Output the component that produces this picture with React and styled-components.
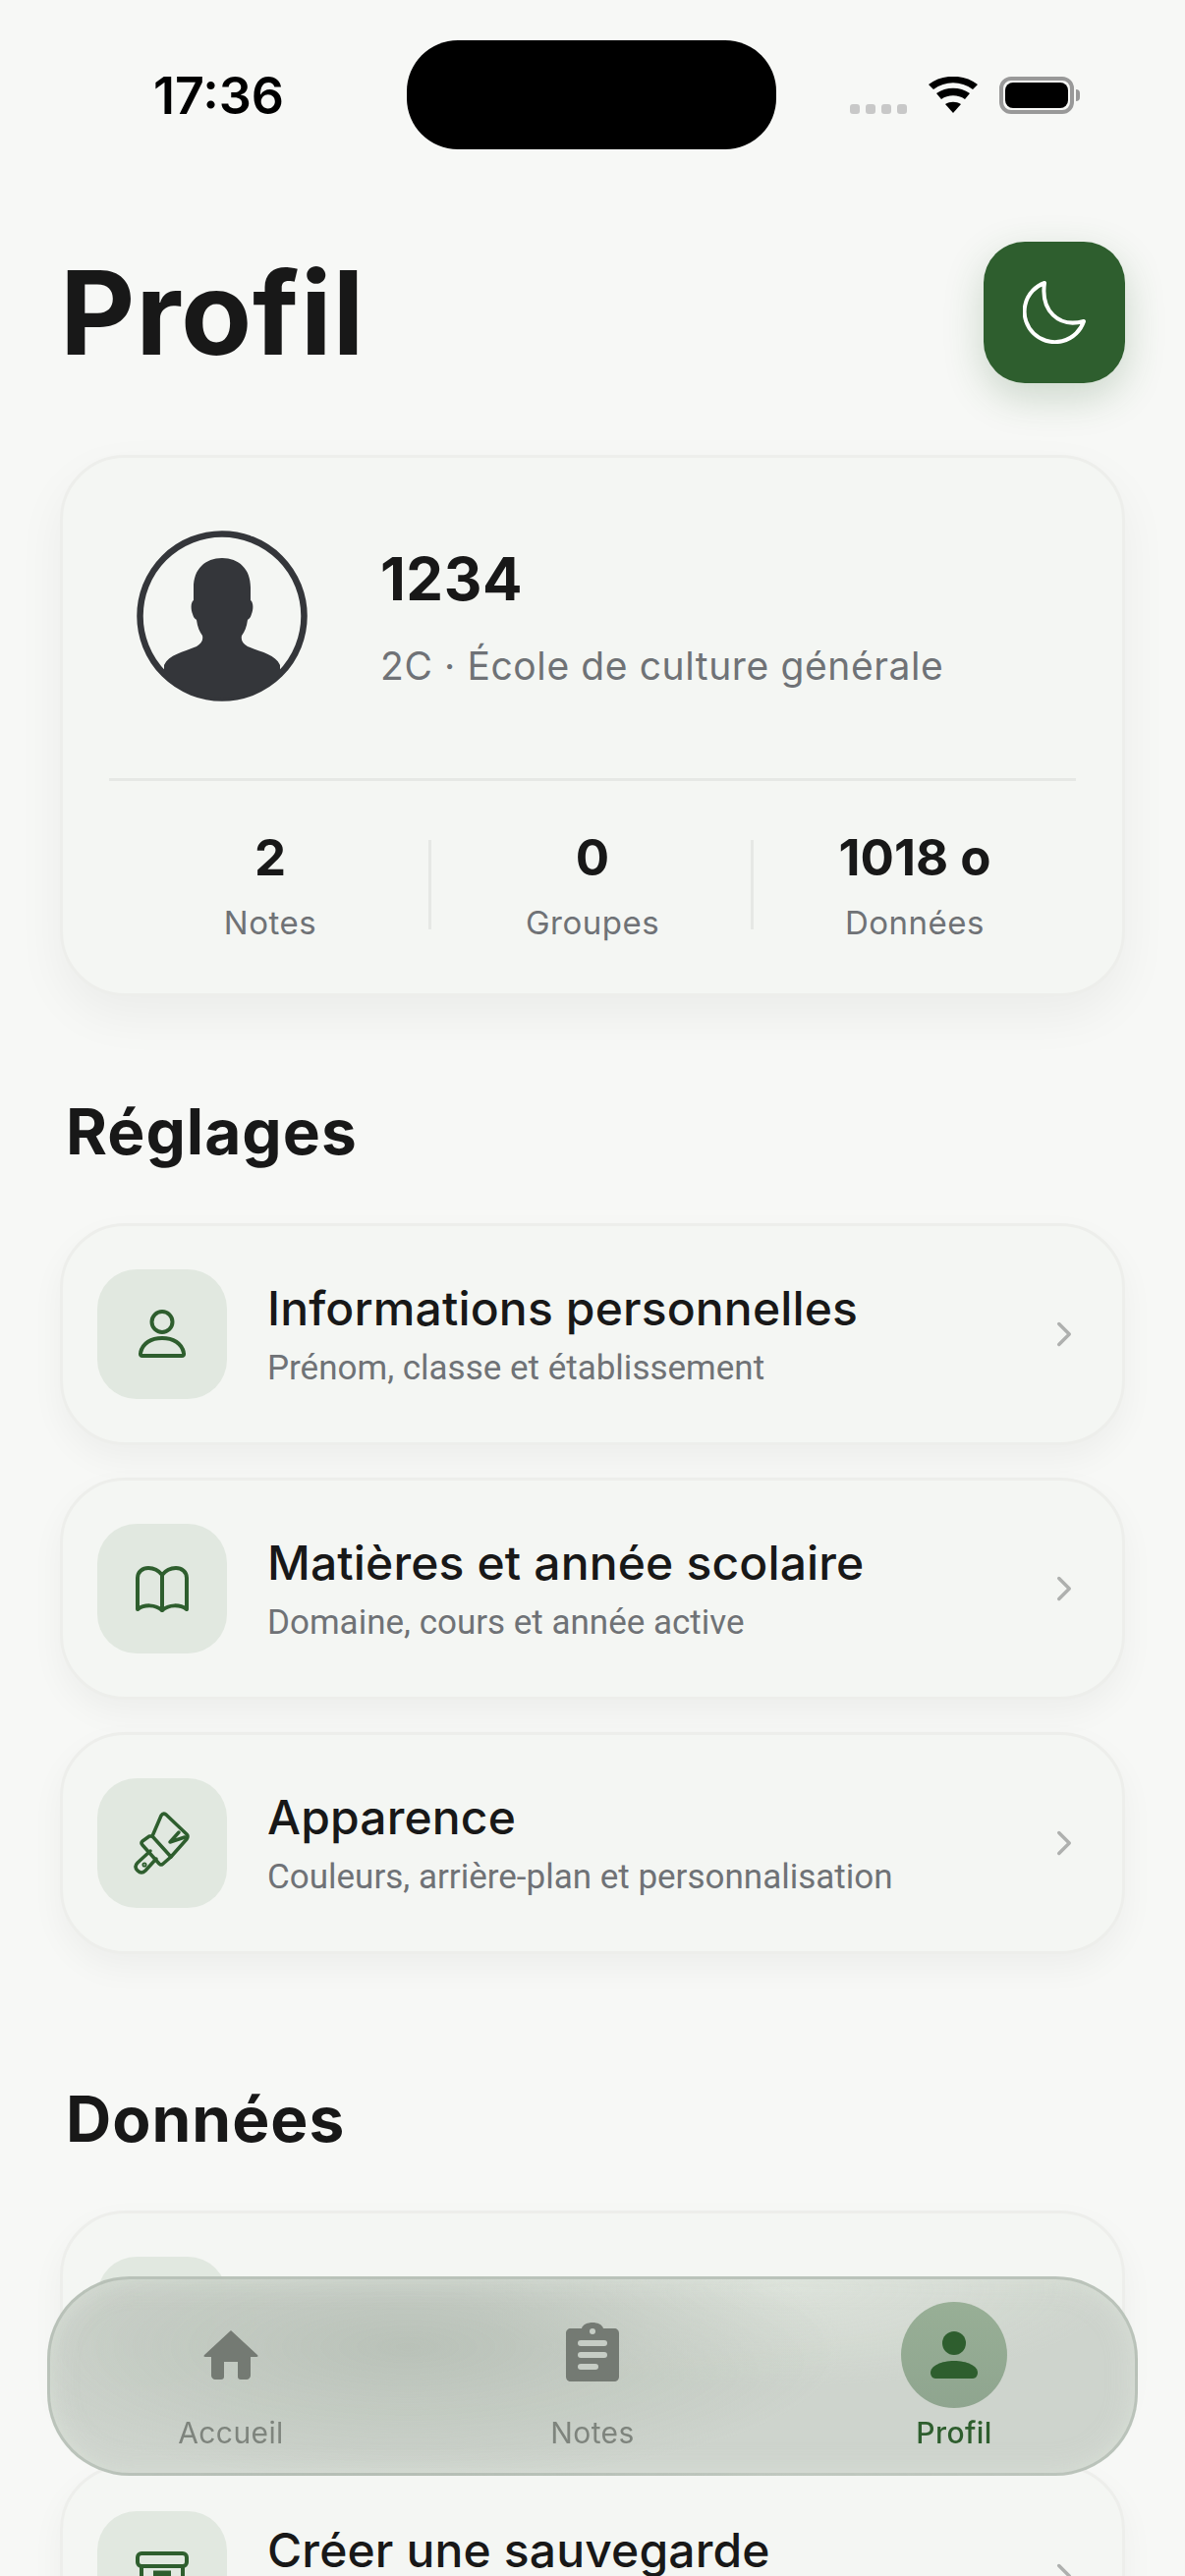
import styled, { createGlobalStyle } from "styled-components";
import { ChevronRight } from "lucide-react";

const GlobalStyle = createGlobalStyle`
    html, body {
        margin: 0;
        padding: 0;
        background: #F7F8F6;
    }
    * {
        box-sizing: border-box;
    }
`

const settings = [
    { title: "Informations personnelles", sub: "Prénom, classe et établissement", icon: <PersonIcon /> },
    { title: "Matières et année scolaire", sub: "Domaine, cours et année active", icon: <BookIcon /> },
    { title: "Apparence", sub: "Couleurs, arrière-plan et personnalisation", icon: <BrushIcon /> },
];

const stats = [
    { value: "2", label: "Notes" },
    { value: "0", label: "Groupes" },
    { value: "1018 o", label: "Données" },
];

function MoonIcon() {
    return (
        <svg width="64" height="64" viewBox="0 0 64 64" fill="none" stroke="#FFFFFF" strokeWidth="4" strokeLinejoin="round">
            <path d="M22 2C18 30 36 48 62 41A31 31 0 1 1 22 2z" />
        </svg>
    )
}

function PersonIcon() {
    return (
        <svg width="48" height="50" viewBox="0 0 48 50" fill="none" stroke="#2E5E2E" strokeWidth="4" strokeLinejoin="round">
            <circle cx="24" cy="12.500" r="10.500" />
            <path d="M4 47c-1.500 0-2.500-1-2-3C4 34 13 29 24 29s20 5 22 15c.5 2-.5 3-2 3z" />
        </svg>
    )
}

function BookIcon() {
    return (
        <svg width="54" height="47" viewBox="0 0 54 47" fill="none" stroke="#2E5E2E" strokeWidth="4" strokeLinejoin="round" strokeLinecap="round">
            <path d="M27 9C23 4 18 2 13 2 7 2 2 6 2 12v32c7-5 18-5 25 1 7-6 18-6 25-1V12c0-6-5-10-11-10-5 0-10 2-14 7z" />
            <path d="M27 9v36" />
        </svg>
    )
}

function BrushIcon() {
    return (
        <svg width="80" height="80" viewBox="0 4 80 80" fill="none" stroke="#2E5E2E" strokeWidth="3.500" strokeLinejoin="round" strokeLinecap="round">
            <path d="M30 37L39 16Q41 13 44 15L65 35Q67 37 65 40L49 58z" />
            <path d="M30 37H27L20 42Q18 44 20 46L37 65Q39 67 41 65L49 58" />
            <path d="M28 52L15 64Q11 68 15 72Q19 76 23 72L34 60" />
            <path d="M57 33L48 43L63 38" />
            <circle cx="22" cy="66" r="0.800" fill="#2E5E2E" />
        </svg>
    )
}

function ArchiveIcon() {
    return (
        <svg width="54" height="50" viewBox="0 0 54 50" fill="none" stroke="#2E5E2E" strokeWidth="4" strokeLinejoin="round">
            <rect x="2" y="2" width="50" height="13" rx="4" />
            <path d="M6 15v33h42V15" />
            <path d="M18 23h18" strokeWidth="7" />
        </svg>
    )
}

function Avatar() {
    return (
        <svg width="174" height="174" viewBox="0 0 174 174">
            <clipPath id="avatar-clip">
                <circle cx="87" cy="87" r="84" />
            </clipPath>
            <circle cx="87" cy="87" r="83.500" fill="#F4F6F3" stroke="#34363A" strokeWidth="6.500" />
            <path
                clipPath="url(#avatar-clip)"
                fill="#34363A"
                d="M87 28c17 0 29 11 29 30v13c3 2 3 9 1 14-1 4-3 5-4 6-1 7-3 12-6 16-1 5 1 8 6 11 14 6 28 8 33 19V174H28V137c5-11 19-13 33-19 5-3 7-6 6-11-3-4-5-9-6-16-1-1-3-2-4-6-2-5-2-12 1-14V58c0-19 12-30 29-30z"
            />
        </svg>
    )
}

function HomeGlyph() {
    return (
        <svg width="56" height="50" viewBox="0 0 56 50" fill="#747A73">
            <path d="M28 0L55 25c1 1 .5 2-1 2h-6v19c0 2-2 4-4 4h-6c-2 0-3-1-3-3V32H21v15c0 2-1 3-3 3h-6c-2 0-4-2-4-4V27H2c-1.500 0-2-1-1-2z" />
        </svg>
    )
}

function NotesGlyph() {
    return (
        <svg width="54" height="66" viewBox="0 0 54 66">
            <path d="M5 6h11c1-4 6-6 11-6s10 2 11 6h11c3 0 5 2 5 5v44c0 3-2 5-5 5H5c-3 0-5-2-5-5V11c0-3 2-5 5-5z" fill="#747A73" />
            <circle cx="27" cy="9" r="3" fill="#C6CDC5" />
            <rect x="12" y="18" width="30" height="6" rx="3" fill="#C6CDC5" />
            <rect x="12" y="30" width="30" height="6" rx="3" fill="#C6CDC5" />
            <rect x="12" y="42" width="21" height="6" rx="3" fill="#C6CDC5" />
        </svg>
    )
}

function ProfileGlyph() {
    return (
        <svg width="48" height="48" viewBox="0 0 48 48" fill="#2E5E2E">
            <circle cx="24" cy="12" r="12" />
            <path d="M0 42c0-7 11-12 24-12s24 5 24 12c0 3-2 6-5 6H5c-3 0-5-3-5-6z" />
        </svg>
    )
}

export default function App() {
    return (
        <>
            <GlobalStyle />
            <Screen>
                <StatusBar>
                    <Time>17:36</Time>
                    <Island />
                    <StatusIcons>
                        <SignalDots>
                            <i /><i /><i /><i />
                        </SignalDots>
                        <svg width="50" height="38" viewBox="0 0 50 38">
                            <path d="M25 37L17 28c5-3 11-3 16 0z" />
                            <path d="M13 23l-5-6c10-7 24-7 34 0l-5 6c-7-5-17-5-24 0z" />
                            <path d="M5 13L0 8c14-11 36-11 50 0l-5 5C33 4 17 4 5 13z" />
                        </svg>
                        <Battery><BatteryFill /></Battery>
                    </StatusIcons>
                </StatusBar>
                <Header>
                    <Title>Profil</Title>
                    <ThemeButton>
                        <MoonIcon />
                    </ThemeButton>
                </Header>
                <ProfileCard>
                    <Identity>
                        <Avatar />
                        <div>
                            <Name>1234</Name>
                            <ClassLine>2C · École de culture générale</ClassLine>
                        </div>
                    </Identity>
                    <Stats>
                        {stats.map((s) => (
                            <Stat key={s.label}>
                                <StatValue>{s.value}</StatValue>
                                <StatLabel>{s.label}</StatLabel>
                            </Stat>
                        ))}
                    </Stats>
                </ProfileCard>
                <SectionTitle>Réglages</SectionTitle>
                <Rows>
                    {settings.map((s) => (
                        <Row key={s.title}>
                            <IconBox>{s.icon}</IconBox>
                            <RowText>
                                <RowTitle>{s.title}</RowTitle>
                                <RowSub>{s.sub}</RowSub>
                            </RowText>
                            <ChevronRight size={42} color="#AEB0AE" strokeWidth={2} />
                        </Row>
                    ))}
                </Rows>
                <SectionTitle $second>Données</SectionTitle>
                <Rows>
                    <Row>
                        <IconBox />
                    </Row>
                    <Row>
                        <IconBox><ArchiveIcon /></IconBox>
                        <RowText>
                            <RowTitle>Créer une sauvegarde</RowTitle>
                            <RowSub>&nbsp;</RowSub>
                        </RowText>
                        <ChevronRight size={42} color="#AEB0AE" strokeWidth={2} />
                    </Row>
                </Rows>
                <TabBar>
                    <Tab>
                        <TabIcon><HomeGlyph /></TabIcon>
                        <TabLabel>Accueil</TabLabel>
                    </Tab>
                    <Tab>
                        <TabIcon><NotesGlyph /></TabIcon>
                        <TabLabel>Notes</TabLabel>
                    </Tab>
                    <Tab>
                        <TabIcon $active><ProfileGlyph /></TabIcon>
                        <TabLabel $active>Profil</TabLabel>
                    </Tab>
                </TabBar>
            </Screen>
        </>
    )
}

const Screen = styled.div`
    position: relative;
    width: 1206px;
    height: 2622px;
    overflow: hidden;
    padding: 41px 61px 0;
    background: #F7F8F6;
    font-family: "Inter", "Liberation Sans", sans-serif;
    color: #181818;
`
const StatusBar = styled.div`
    display: flex;
    align-items: center;
    height: 111px;
`
const Time = styled.div`
    width: 353px;
    padding: 2px 0 0 95px;
    font-size: 52px;
    font-weight: 600;
    color: #000000;
`
const Island = styled.div`
    flex: none;
    width: 376px;
    height: 111px;
    border-radius: 52px;
    background: #000000;
`
const StatusIcons = styled.div`
    display: flex;
    align-items: flex-end;
    flex: none;
    padding-left: 75px;
    gap: 22px;
    svg {
        flex: none;
    }
`
const SignalDots = styled.div`
    display: flex;
    gap: 6px;
    i {
        width: 10px;
        height: 10px;
        border-radius: 3px;
        background: #C8C8C8;
    }
`
const Battery = styled.div`
    position: relative;
    flex: none;
    width: 76px;
    height: 38px;
    border: 4px solid #999999;
    border-radius: 12px;
    padding: 2px;
    &::after {
        content: "";
        position: absolute;
        right: -10px;
        top: 9px;
        width: 4px;
        height: 12px;
        background: #999999;
        border-radius: 0 4px 4px 0;
    }
`
const BatteryFill = styled.div`
    width: 100%;
    height: 100%;
    border-radius: 8px;
    background: #000000;
`
const Header = styled.div`
    display: flex;
    align-items: center;
    justify-content: space-between;
    height: 144px;
    margin-top: 94px;
`
const Title = styled.h1`
    margin: 0;
    font-size: 118px;
    font-weight: 700;
    line-height: 144px;
    letter-spacing: 0.7px;
    color: #181818;
`
const ThemeButton = styled.div`
    display: flex;
    align-items: center;
    justify-content: center;
    width: 144px;
    height: 144px;
    border-radius: 42px;
    background: #2E5E2E;
    box-shadow: 0 14px 40px rgba(46, 94, 46, 0.22);
`
const ProfileCard = styled.section`
    height: 551px;
    margin-top: 73px;
    padding: 74px 47px 0;
    border: 3px solid #EDEEEB;
    border-radius: 66px;
    background: #F4F6F3;
    box-shadow: 0 20px 50px rgba(0, 0, 0, 0.05);
`
const Identity = styled.div`
    display: flex;
    align-items: center;
    gap: 74px;
    padding-left: 28px;
    padding-bottom: 78px;
    border-bottom: 3px solid #E6E8E5;
`
const Name = styled.div`
    font-size: 60px;
    font-weight: 700;
    line-height: 73px;
    letter-spacing: 0.5px;
    color: #181818;
`
const ClassLine = styled.div`
    margin-top: 28px;
    font-size: 39px;
    line-height: 47px;
    letter-spacing: 0.6px;
    color: #6F7276;
`
const Stats = styled.div`
    display: grid;
    grid-template-columns: repeat(3, 1fr);
    padding-top: 60px;
`
const Stat = styled.div`
    display: flex;
    flex-direction: column;
    align-items: center;
    height: 91px;
    & + & {
        margin-left: -3px;
        border-left: 3px solid #E6E8E5;
    }
`
const StatValue = styled.div`
    font-size: 51px;
    font-weight: 700;
    line-height: 60px;
    margin-top: -12px;
`
const StatLabel = styled.div`
    margin-top: 16px;
    font-size: 33px;
    line-height: 40px;
    letter-spacing: 0.5px;
    white-space: nowrap;
    color: #6F7276;
`
const SectionTitle = styled.h2`
    margin: ${(p) => (p.$second ? "130px" : "100px")} 0 55px 6px;
    font-size: 64px;
    font-weight: 700;
    line-height: 76px;
    letter-spacing: 1px;
    color: #181818;
`
const Rows = styled.div`
    display: flex;
    flex-direction: column;
    gap: 33px;
`
const Row = styled.div`
    display: flex;
    align-items: center;
    flex: none;
    height: 226px;
    padding: 0 38px 0 35px;
    border: 3px solid #EDEEEB;
    border-radius: 66px;
    background: #F4F6F3;
    box-shadow: 0 14px 34px rgba(0, 0, 0, 0.045);
`
const IconBox = styled.div`
    display: flex;
    align-items: center;
    justify-content: center;
    flex: none;
    width: 132px;
    height: 132px;
    border-radius: 40px;
    background: #E1E8E0;
`
const RowText = styled.div`
    flex: 1;
    padding-left: 41px;
`
const RowTitle = styled.div`
    font-size: 48px;
    font-weight: 500;
    line-height: 58px;
    letter-spacing: 0.15px;
    color: #181818;
`
const RowSub = styled.div`
    margin-top: 11px;
    font-family: "Roboto", "Inter", sans-serif;
    font-size: 35px;
    line-height: 42px;
    color: #6F7276;
`
const TabBar = styled.nav`
    position: absolute;
    left: 48px;
    top: 2317px;
    display: grid;
    grid-template-columns: repeat(3, 1fr);
    width: 1110px;
    height: 203px;
    padding-top: 23px;
    border: 3px solid rgba(170, 180, 170, 0.55);
    border-radius: 84px;
    background:
        radial-gradient(ellipse 40% 70% at 33% 35%, rgba(178, 187, 177, 0.75), rgba(178, 187, 177, 0) 100%),
        radial-gradient(ellipse 30% 50% at 68% 5%, rgba(222, 228, 220, 0.85), rgba(222, 228, 220, 0) 100%),
        rgba(200, 207, 199, 0.88);
    box-shadow: inset 0 0 26px rgba(226, 232, 224, 0.55);
    backdrop-filter: blur(22px);
`
const Tab = styled.div`
    display: flex;
    flex-direction: column;
    align-items: center;
`
const TabIcon = styled.div`
    display: flex;
    align-items: center;
    justify-content: center;
    width: 108px;
    height: 108px;
    border-radius: 50%;
    background: ${(p) => (p.$active ? "linear-gradient(#98AF96, #8FA58F)" : "transparent")};
`
const TabLabel = styled.div`
    margin-top: 7px;
    font-size: 30px;
    line-height: 36px;
    font-weight: ${(p) => (p.$active ? 500 : 400)};
    letter-spacing: 0.4px;
    color: ${(p) => (p.$active ? "#2E5E2E" : "#7E847D")};
`
